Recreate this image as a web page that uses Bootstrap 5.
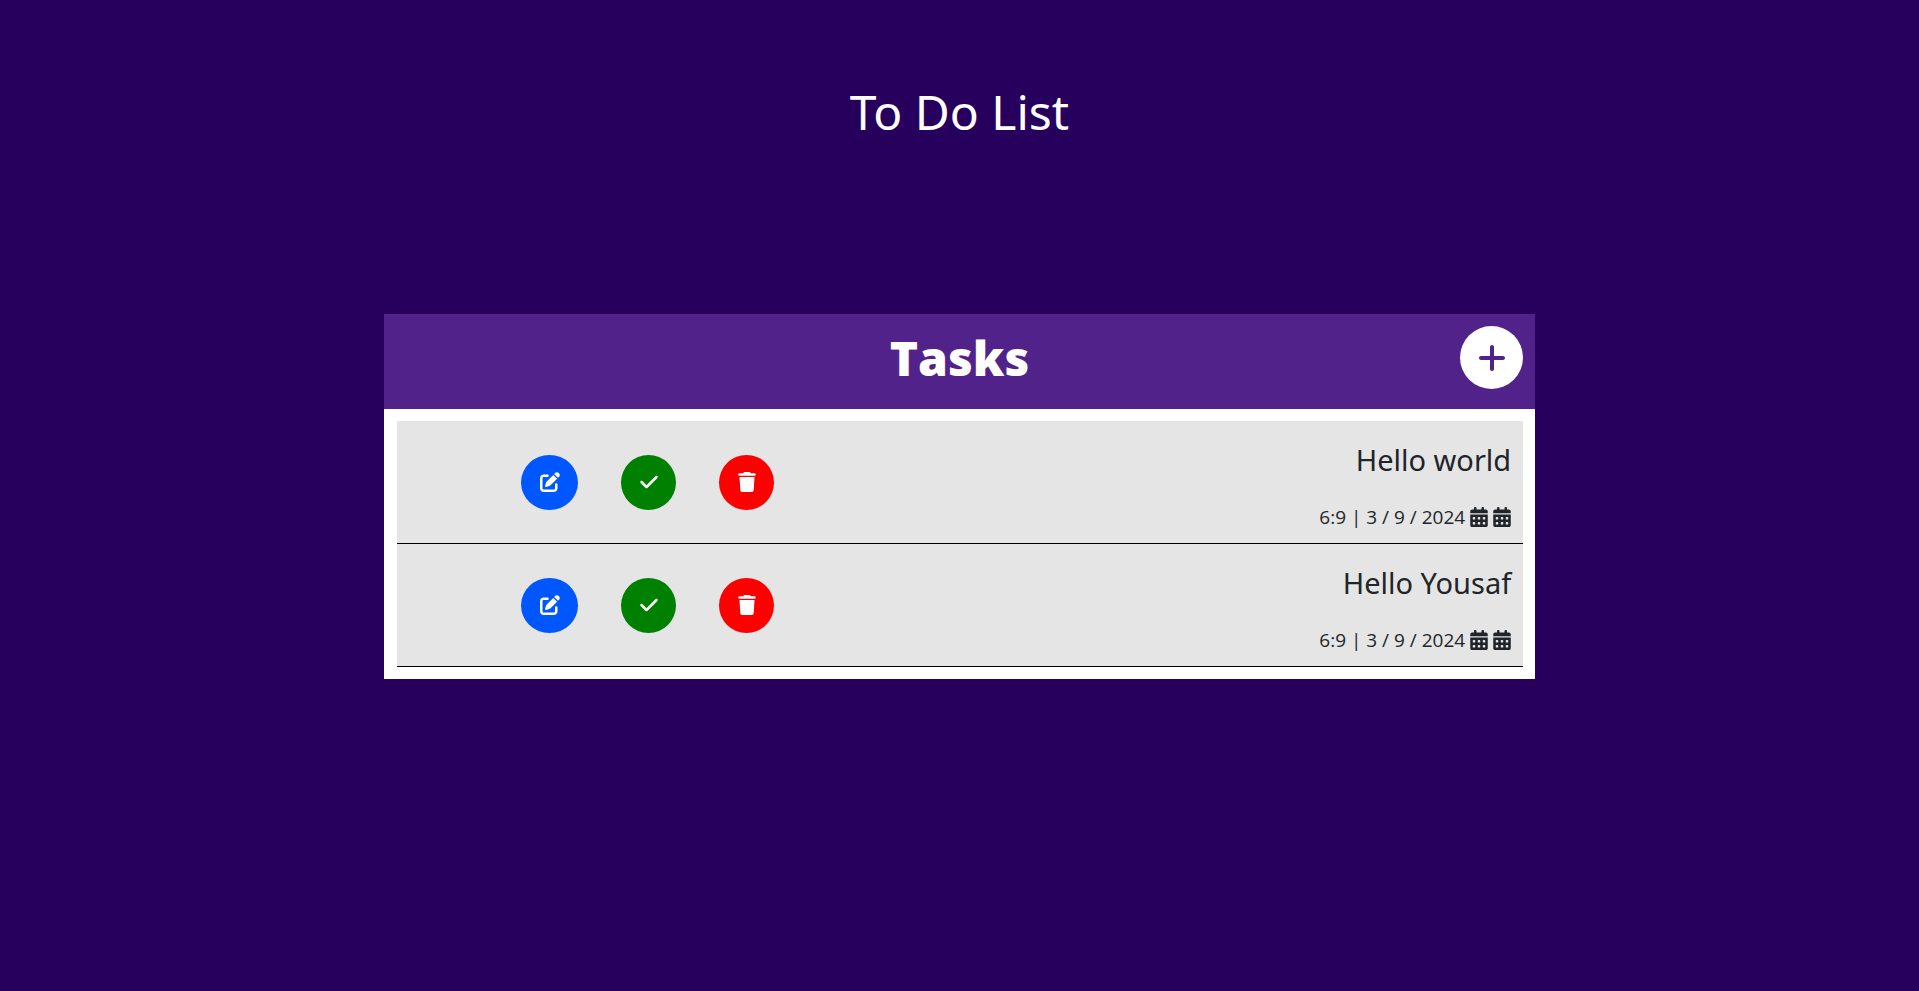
<!DOCTYPE html>
<html lang="en">
<head>
<meta charset="utf-8">
<meta name="viewport" content="width=device-width, initial-scale=1">
<title>To Do List</title>
<link href="https://cdn.jsdelivr.net/npm/bootstrap@5.3.0/dist/css/bootstrap.min.css" rel="stylesheet">
<style>
  body { background: #27005d; font-family: "Segoe UI", "Open Sans", "Noto Sans", sans-serif; }
  .page-title { font-family: "Segoe UI", "Noto Sans", sans-serif; font-size: 48px; line-height: 60px; padding-top: 82px; margin-bottom: 172px; }
  .task-board { width: 60%; min-width: 340px; }
  .board-head { background: #51238a; min-height: 95px; padding: 12px; }
  .board-title { font-size: 48px; line-height: 64px; font-weight: 900; }
  .add-btn { width: 63px; height: 63px; top: 12px; right: 12px; color: #51238a; }
  .board-body { padding: 12px 12px 12px 13px; }
  .task-item { background: #e5e5e5; border-bottom: 1px solid #000; height: 123px; padding-right: 12px; }
  .task-actions { width: 45%; gap: 43px; }
  .round-btn { width: 55px; height: 55px; }
  .edit-btn { width: 57px; background: #0056ff; }
  .done-btn { background: green; }
  .delete-btn { background: red; }
  .task-text { padding-top: 8px; }
  .task-name { font-family: "Segoe UI", "Noto Sans", sans-serif; font-size: 29px; line-height: 40px; font-weight: 400; margin-bottom: 22px; }
  .task-date { font-size: 19px; line-height: 30px; font-weight: 400; gap: 5px; }
  .icon { fill: currentColor; display: block; }
</style>
</head>
<body>
<svg class="d-none" aria-hidden="true">
  <symbol id="i-plus" viewBox="0 0 448 512"><path d="M256 80c0-17.700-14.300-32-32-32s-32 14.300-32 32v144H48c-17.700 0-32 14.300-32 32s14.300 32 32 32h144v144c0 17.700 14.300 32 32 32s32-14.300 32-32V288h144c17.700 0 32-14.300 32-32s-14.300-32-32-32H256V80z"/></symbol>
  <symbol id="i-edit" viewBox="0 0 512 512"><path d="M471.600 21.700c-21.900-21.900-57.300-21.900-79.200 0L362.300 51.700l97.900 97.900 30.100-30.100c21.900-21.900 21.900-57.300 0-79.200L471.600 21.700zm-299.200 220c-6.100 6.100-10.800 13.600-13.500 21.900l-29.600 88.800c-2.900 8.600-.6 18.100 5.800 24.600s15.900 8.700 24.600 5.800l88.800-29.600c8.200-2.700 15.700-7.400 21.900-13.500L437.700 172.300 339.700 74.300 172.400 241.700zM96 64C43 64 0 107 0 160V416c0 53 43 96 96 96H352c53 0 96-43 96-96V320c0-17.700-14.300-32-32-32s-32 14.300-32 32v96c0 17.700-14.300 32-32 32H96c-17.700 0-32-14.300-32-32V160c0-17.700 14.300-32 32-32h96c17.700 0 32-14.300 32-32s-14.300-32-32-32H96z"/></symbol>
  <symbol id="i-check" viewBox="0 0 448 512"><path d="M438.600 105.400c12.500 12.500 12.500 32.800 0 45.300l-256 256c-12.500 12.500-32.800 12.500-45.300 0l-128-128c-12.500-12.500-12.500-32.800 0-45.300s32.800-12.500 45.300 0L160 338.700 393.400 105.400c12.500-12.500 32.800-12.500 45.300 0z"/></symbol>
  <symbol id="i-trash" viewBox="0 0 448 512"><path d="M135.200 17.700L128 32H32C14.300 32 0 46.300 0 64S14.300 96 32 96H416c17.700 0 32-14.300 32-32s-14.300-32-32-32H320l-7.200-14.300C307.400 6.800 296.300 0 284.200 0H163.800c-12.100 0-23.200 6.800-28.600 17.700zM416 128H32L53.200 467c1.600 25.300 22.600 45 47.900 45H346.900c25.300 0 46.300-19.700 47.900-45L416 128z"/></symbol>
  <symbol id="i-calendar" viewBox="0 0 448 512"><path fill-rule="evenodd" d="M128 0c17.700 0 32 14.300 32 32V64H288V32c0-17.700 14.300-32 32-32s32 14.300 32 32V64h48c26.500 0 48 21.500 48 48v48H0V112C0 85.500 21.500 64 48 64H96V32c0-17.700 14.300-32 32-32zM0 192H448V464c0 26.500-21.500 48-48 48H48c-26.500 0-48-21.500-48-48V192zm64 80v32c0 8.800 7.200 16 16 16h32c8.800 0 16-7.200 16-16V272c0-8.800-7.200-16-16-16H80c-8.800 0-16 7.200-16 16zm128 0v32c0 8.800 7.200 16 16 16h32c8.800 0 16-7.200 16-16V272c0-8.800-7.200-16-16-16H208c-8.800 0-16 7.200-16 16zm144-16c-8.800 0-16 7.200-16 16v32c0 8.800 7.200 16 16 16h32c8.800 0 16-7.200 16-16V272c0-8.800-7.200-16-16-16H336zM64 400v32c0 8.800 7.200 16 16 16h32c8.800 0 16-7.200 16-16V400c0-8.800-7.200-16-16-16H80c-8.800 0-16 7.200-16 16zm144-16c-8.800 0-16 7.200-16 16v32c0 8.800 7.200 16 16 16h32c8.800 0 16-7.200 16-16V400c0-8.800-7.200-16-16-16H208zm112 16v32c0 8.800 7.200 16 16 16h32c8.800 0 16-7.200 16-16V400c0-8.800-7.200-16-16-16H336c-8.800 0-16 7.200-16 16z"/></symbol>
</svg>

<h1 class="page-title text-white text-center fw-normal">To Do List</h1>

<main class="task-board mx-auto bg-white">
  <header class="board-head position-relative text-center text-white">
    <h2 class="board-title m-0">Tasks</h2>
    <button type="button" class="add-btn btn btn-light bg-white border-0 rounded-circle p-0 position-absolute d-flex align-items-center justify-content-center" aria-label="Add task"><svg class="icon" width="28" height="32"><use href="#i-plus"/></svg></button>
  </header>
  <ul class="board-body list-unstyled m-0">
    <li class="task-item d-flex justify-content-between align-items-center">
      <div class="task-actions d-flex justify-content-center">
        <button type="button" class="round-btn edit-btn btn border-0 rounded-circle p-0 text-white d-flex align-items-center justify-content-center" aria-label="Edit"><svg class="icon" width="20" height="20"><use href="#i-edit"/></svg></button>
        <button type="button" class="round-btn done-btn btn border-0 rounded-circle p-0 text-white d-flex align-items-center justify-content-center" aria-label="Done"><svg class="icon" width="18" height="20"><use href="#i-check"/></svg></button>
        <button type="button" class="round-btn delete-btn btn border-0 rounded-circle p-0 text-white d-flex align-items-center justify-content-center" aria-label="Delete"><svg class="icon" width="18" height="20"><use href="#i-trash"/></svg></button>
      </div>
      <div class="task-text text-end">
        <h3 class="task-name">Hello world</h3>
        <div class="task-date d-flex justify-content-end align-items-center"><span>6:9 | 3 / 9 / 2024</span><svg class="icon" width="18" height="20"><use href="#i-calendar"/></svg><svg class="icon" width="18" height="20"><use href="#i-calendar"/></svg></div>
      </div>
    </li>
    <li class="task-item d-flex justify-content-between align-items-center">
      <div class="task-actions d-flex justify-content-center">
        <button type="button" class="round-btn edit-btn btn border-0 rounded-circle p-0 text-white d-flex align-items-center justify-content-center" aria-label="Edit"><svg class="icon" width="20" height="20"><use href="#i-edit"/></svg></button>
        <button type="button" class="round-btn done-btn btn border-0 rounded-circle p-0 text-white d-flex align-items-center justify-content-center" aria-label="Done"><svg class="icon" width="18" height="20"><use href="#i-check"/></svg></button>
        <button type="button" class="round-btn delete-btn btn border-0 rounded-circle p-0 text-white d-flex align-items-center justify-content-center" aria-label="Delete"><svg class="icon" width="18" height="20"><use href="#i-trash"/></svg></button>
      </div>
      <div class="task-text text-end">
        <h3 class="task-name">Hello Yousaf</h3>
        <div class="task-date d-flex justify-content-end align-items-center"><span>6:9 | 3 / 9 / 2024</span><svg class="icon" width="18" height="20"><use href="#i-calendar"/></svg><svg class="icon" width="18" height="20"><use href="#i-calendar"/></svg></div>
      </div>
    </li>
  </ul>
</main>
<script src="https://cdn.jsdelivr.net/npm/bootstrap@5.3.0/dist/js/bootstrap.bundle.min.js"></script>
</body>
</html>
